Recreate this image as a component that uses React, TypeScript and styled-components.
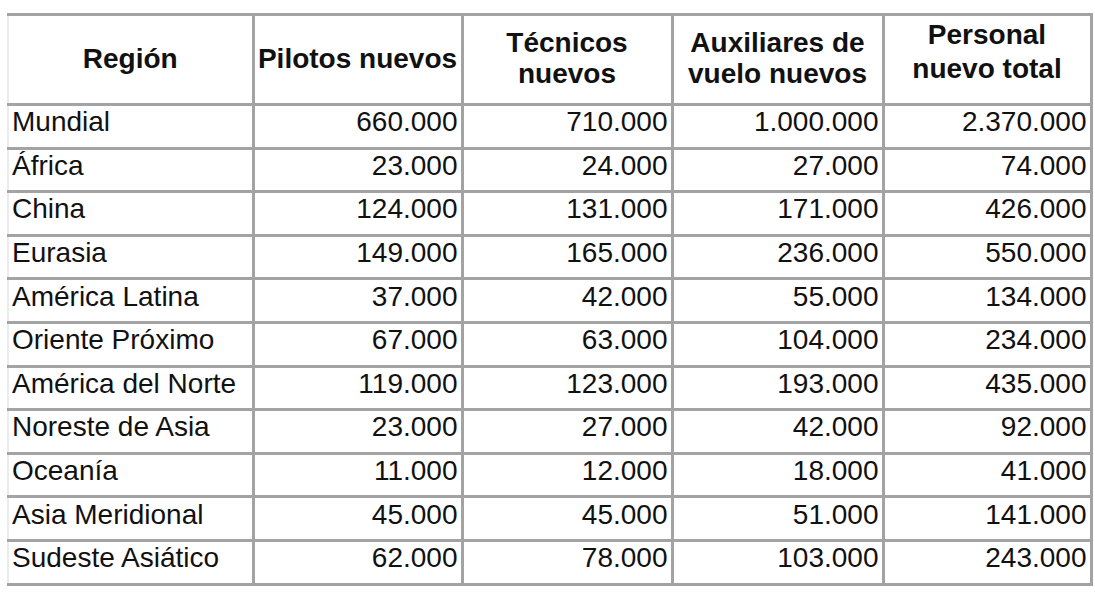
import React from "react";
import styled, { createGlobalStyle } from "styled-components";

const Global = createGlobalStyle`
  html, body { margin: 0; padding: 0; background: #ffffff; }
  body { font-family: "Liberation Sans", Arial, sans-serif; color: #111111; }
`;

const Page = styled.div`
  width: 1095px;
  height: 600px;
  padding: 13px 0 0 7px;
  box-sizing: border-box;
  background: #ffffff;
`;

const Table = styled.table`
  border-collapse: collapse;
  table-layout: fixed;
  width: 1083px;
  font-size: 28px;
  border-top: 3px solid #a3a3a3;
  border-right: 3px solid #a3a3a3;
  border-bottom: 3px solid #a3a3a3;
  border-left: 2px solid #ececec;
`;

const HeadCell = styled.th<{ $top?: boolean }>`
  font-weight: bold;
  text-align: center;
  vertical-align: ${(p) => (p.$top ? "top" : "middle")};
  height: 84px;
  padding: ${(p) => (p.$top ? "2px 0 0" : "0 2px 3px")};
  line-height: ${(p) => (p.$top ? 34 : 31)}px;
  border: 3px solid #a3a3a3;
  border-top: none;
  &:first-child { border-left: none; }
`;

const Row = styled.tr``;

const Cell = styled.td<{ $num?: boolean }>`
  height: 32.6px;
  padding: 0 ${(p) => (p.$num ? "3px" : "0")} 8px ${(p) => (p.$num ? "0" : "3px")};
  text-align: ${(p) => (p.$num ? "right" : "left")};
  vertical-align: middle;
  line-height: 30px;
  white-space: nowrap;
  border: 3px solid #a3a3a3;
  &:first-child { border-left: none; }
`;

const rows: [string, string, string, string, string][] = [
  ["Mundial", "660.000", "710.000", "1.000.000", "2.370.000"],
  ["África", "23.000", "24.000", "27.000", "74.000"],
  ["China", "124.000", "131.000", "171.000", "426.000"],
  ["Eurasia", "149.000", "165.000", "236.000", "550.000"],
  ["América Latina", "37.000", "42.000", "55.000", "134.000"],
  ["Oriente Próximo", "67.000", "63.000", "104.000", "234.000"],
  ["América del Norte", "119.000", "123.000", "193.000", "435.000"],
  ["Noreste de Asia", "23.000", "27.000", "42.000", "92.000"],
  ["Oceanía", "11.000", "12.000", "18.000", "41.000"],
  ["Asia Meridional", "45.000", "45.000", "51.000", "141.000"],
  ["Sudeste Asiático", "62.000", "78.000", "103.000", "243.000"],
];

export default function App() {
  return (
    <Page>
      <Global />
      <Table>
        <colgroup>
          <col style={{ width: 245 }} />
          <col style={{ width: 209 }} />
          <col style={{ width: 210 }} />
          <col style={{ width: 211 }} />
          <col style={{ width: 208 }} />
        </colgroup>
        <thead>
          <tr>
            <HeadCell>Región</HeadCell>
            <HeadCell>Pilotos nuevos</HeadCell>
            <HeadCell>Técnicos<br />nuevos</HeadCell>
            <HeadCell>Auxiliares de<br />vuelo nuevos</HeadCell>
            <HeadCell $top>Personal<br />nuevo total</HeadCell>
          </tr>
        </thead>
        <tbody>
          {rows.map((r) => (
            <Row key={r[0]}>
              <Cell>{r[0]}</Cell>
              <Cell $num>{r[1]}</Cell>
              <Cell $num>{r[2]}</Cell>
              <Cell $num>{r[3]}</Cell>
              <Cell $num>{r[4]}</Cell>
            </Row>
          ))}
        </tbody>
      </Table>
    </Page>
  );
}
